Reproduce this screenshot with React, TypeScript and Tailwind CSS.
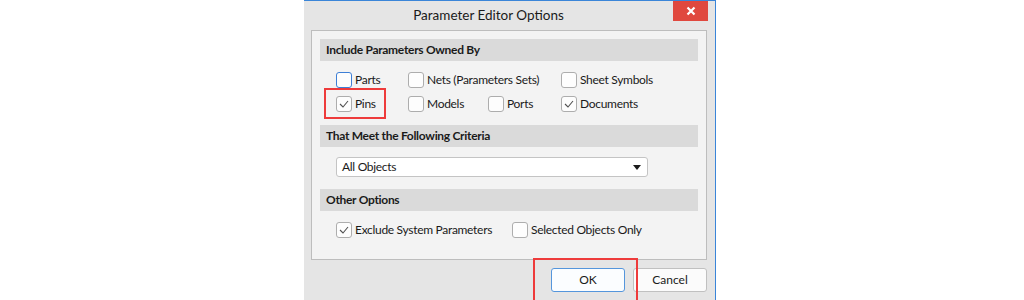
import React from "react";

const font = { fontFamily: 'Lato, "Noto Sans", sans-serif' };

function Check({ checked, focus }: { checked?: boolean; focus?: boolean }) {
  return (
    <div
      className={
        "w-[16px] h-[16px] rounded-[3px] border bg-[#fdfdfd] flex items-center justify-center shrink-0 " +
        (focus ? "border-[#3d7fd6]" : "border-[#adadad]")
      }
    >
      {checked && (
        <svg width="10" height="8" viewBox="0 0 10 8">
          <polyline points="1,4 4,7 9,1" fill="none" stroke="#505050" strokeWidth="1.1" />
        </svg>
      )}
    </div>
  );
}

function Item({ label, checked, focus, w }: { label: string; checked?: boolean; focus?: boolean; w?: string }) {
  return (
    <div className={"flex items-center gap-[3px] " + (w || "")}>
      <Check checked={checked} focus={focus} />
      <span className="text-[12px] tracking-[-0.3px] text-[#1a1a1a] leading-none">{label}</span>
    </div>
  );
}

function Header({ children }: { children: React.ReactNode }) {
  return (
    <div className="h-[22px] bg-[#dadada] flex items-center pl-[6px] text-[12px] tracking-[-0.3px] font-bold text-[#1a1a1a]">
      {children}
    </div>
  );
}

export default function App() {
  return (
    <div className="w-[1024px] h-[300px] bg-white flex overflow-hidden" style={font}>
      <div className="ml-[304px] w-[412px] h-[300px] bg-[#e5e5e5] border-t border-r border-[#3a85d8] flex flex-col relative">
        <div className="h-[29px] flex">
          <div className="flex-1 flex items-center justify-center text-[13.5px] text-[#1a1a1a]">
            Parameter Editor Options
          </div>
          <div className="w-[35px] h-[20px] bg-[#e0483e] flex items-center justify-center mr-[7px]">
            <svg width="10" height="10" viewBox="0 0 10 10">
              <path d="M1.5 1.5 L8.5 8.5 M8.5 1.5 L1.5 8.5" stroke="white" strokeWidth="2.2" />
            </svg>
          </div>
        </div>
        <div className="ml-[7px] mr-[8px] h-[230px] bg-[#f3f3f3] border border-[#bdbdbd] px-[8px] pt-[8px]">
          <Header>Include Parameters Owned By</Header>
          <div className="pl-[16px] pt-[11px] flex flex-col gap-[8px]">
            <div className="flex">
              <Item label="Parts" focus w="w-[72px]" />
              <Item label="Nets (Parameters Sets)" w="w-[153px]" />
              <Item label="Sheet Symbols" />
            </div>
            <div className="flex">
              <Item label="Pins" checked w="w-[72px]" />
              <Item label="Models" w="w-[80px]" />
              <Item label="Ports" w="w-[73px]" />
              <Item label="Documents" checked />
            </div>
          </div>
          <div className="mt-[13px]">
            <Header>That Meet the Following Criteria</Header>
          </div>
          <div className="pl-[16px] pt-[10px]">
            <div className="w-[312px] h-[20px] bg-white border border-[#c4c4c4] rounded-[3px] flex items-center justify-between pl-[5px] pr-[6px]">
              <span className="text-[12px] tracking-[-0.3px] text-[#1a1a1a]">All Objects</span>
              <svg width="8" height="5" viewBox="0 0 8 5">
                <polygon points="0,0 8,0 4,5" fill="#1a1a1a" />
              </svg>
            </div>
          </div>
          <div className="mt-[12px]">
            <Header>Other Options</Header>
          </div>
          <div className="pl-[16px] pt-[11px] flex">
            <Item label="Exclude System Parameters" checked w="w-[176px]" />
            <Item label="Selected Objects Only" />
          </div>
        </div>
        <div className="flex justify-end gap-[8px] mt-[8px] mr-[8px]">
          <div className="w-[74px] h-[24px] rounded-[3px] border border-[#5596dc] bg-[#fbfdff] flex items-center justify-center text-[12px] text-[#1a1a1a]">
            OK
          </div>
          <div className="w-[74px] h-[24px] rounded-[3px] border border-[#c0c0c0] bg-[#fbfbfb] flex items-center justify-center text-[12px] text-[#1a1a1a]">
            Cancel
          </div>
        </div>
        <div className="absolute left-[20px] top-[87px] w-[62px] h-[31px] border-2 border-[#ee3b3b]" />
        <div className="absolute left-[229px] top-[257px] w-[105px] h-[50px] border-2 border-[#ee3b3b]" />
      </div>
    </div>
  );
}
